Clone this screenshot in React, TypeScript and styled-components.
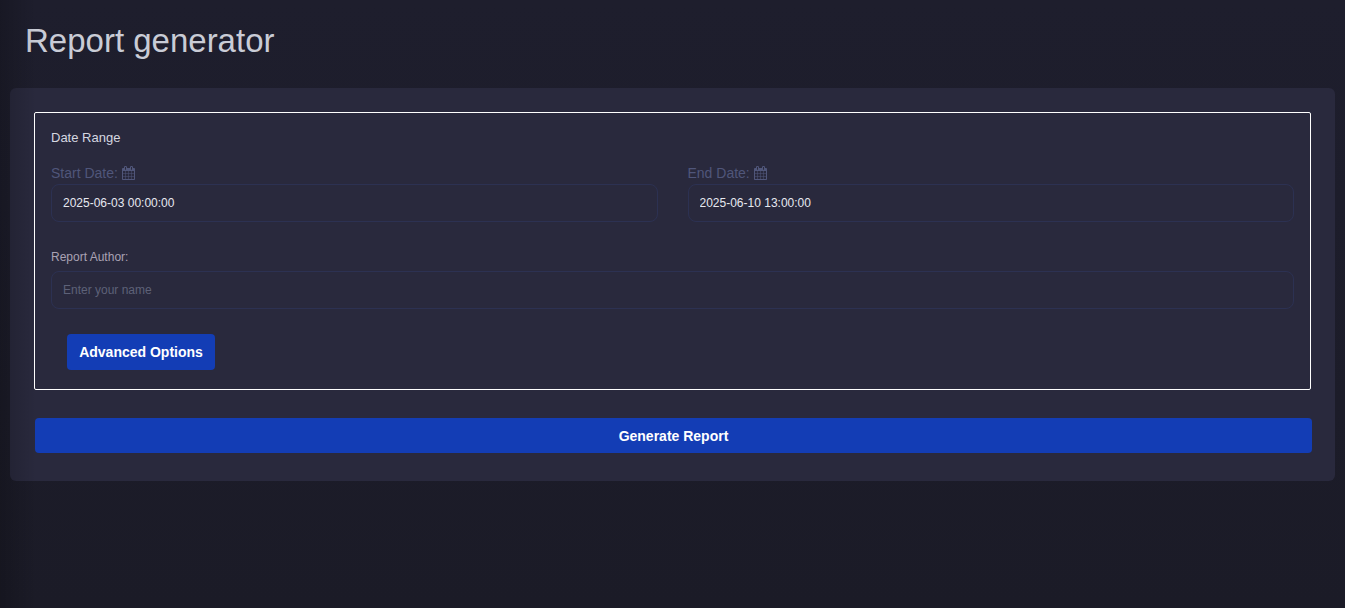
import React from 'react';
import styled, {createGlobalStyle} from 'styled-components';

const GlobalStyle = createGlobalStyle`
  html, body {
    margin: 0;
    padding: 0;
    height: 100%;
    background: #1e1e2d;
    font-family: "Liberation Sans", Arial, sans-serif;
  }
`;

const Page = styled.div`
  position: relative;
  min-height: 608px;
  box-sizing: border-box;
  padding: 0 10px;
  background: linear-gradient(to bottom, #1e1e2d, #1b1b27);
  overflow: hidden;
`;

const EdgeShade = styled.div`
  position: absolute;
  top: 0;
  left: 0;
  bottom: 0;
  width: 36px;
  pointer-events: none;
  background: linear-gradient(to right, rgba(0, 0, 0, 0.2), rgba(0, 0, 0, 0));
`;

const Title = styled.h1`
  margin: 0;
  padding: 21px 15px 0;
  height: 88px;
  box-sizing: border-box;
  font-size: 33px;
  line-height: 40px;
  font-weight: 400;
  color: #c9ccd6;
`;

const Panel = styled.section`
  height: 393px;
  box-sizing: border-box;
  padding: 24px;
  background: #29293d;
  border-radius: 6px;
`;

const Group = styled.fieldset`
  margin: 0;
  height: 278px;
  box-sizing: border-box;
  padding: 16px 16px 0;
  border: 1px solid #ffffff;
  border-radius: 2px;
`;

const GroupTitle = styled.div`
  font-size: 13px;
  line-height: 18px;
  color: #d5d7e0;
`;

const DateRow = styled.div`
  display: grid;
  grid-template-columns: 1fr 1fr;
  column-gap: 30px;
  margin-top: 17px;
`;

const DateLabel = styled.label`
  display: flex;
  align-items: center;
  gap: 4px;
  height: 18px;
  font-size: 14px;
  color: #50567a;
`;

const Field = styled.div`
  display: flex;
  flex-direction: column;
`;

const Input = styled.input`
  width: 100%;
  height: 38px;
  box-sizing: border-box;
  margin-top: 2px;
  padding: 0 11px;
  background: transparent;
  border: 1px solid #2c3152;
  border-radius: 8px;
  outline: none;
  font-family: inherit;
  font-size: 12px;
  color: #e6e8f0;

  &::placeholder {
    color: #5d6178;
  }
`;

const AuthorField = styled(Field)`
  margin-top: 27px;
`;

const AuthorLabel = styled.label`
  height: 20px;
  font-size: 12px;
  line-height: 16px;
  color: #a9a2b4;
`;

const Button = styled.button`
  height: 36px;
  border: 0;
  border-radius: 4px;
  background: #133db5;
  color: #ffffff;
  font-family: inherit;
  font-size: 14px;
  font-weight: 700;
`;

const AdvancedButton = styled(Button)`
  display: block;
  width: 148px;
  margin: 25px 0 0 16px;
`;

const GenerateButton = styled(Button)`
  display: block;
  width: 100%;
  margin: 28px 0 0 1px;
  height: 35px;
`;

const CalendarGlyph = styled.svg`
  width: 13px;
  height: 14px;
  fill: currentColor;
  flex: none;
`;

// Font Awesome 4 style calendar, the packaged icon sets only have the newer shape
function CalendarIcon() {
    return (
        <CalendarGlyph viewBox="0 0 1664 1792">
            <path d="M128 1664h288v-288h-288v288zm352 0h320v-288h-320v288zm-352-352h288v-320h-288v320zm352 0h320v-320h-320v320zm-352-384h288v-288h-288v288zm736 736h320v-288h-320v288zm-384-736h320v-288h-320v288zm768 736h288v-288h-288v288zm-384-352h320v-320h-320v320zm-352-864v-288q0-13-9.5-22.5t-22.5-9.5h-64q-13 0-22.5 9.5t-9.5 22.5v288q0 13 9.5 22.5t22.5 9.5h64q13 0 22.5-9.5t9.5-22.5zm736 864h288v-320h-288v320zm-384-384h320v-288h-320v288zm384 0h288v-288h-288v288zm32-480v-288q0-13-9.5-22.5t-22.5-9.5h-64q-13 0-22.5 9.5t-9.5 22.5v288q0 13 9.5 22.5t22.5 9.5h64q13 0 22.5-9.5t9.5-22.5zm384-64v1280q0 52-38 90t-90 38h-1408q-52 0-90-38t-38-90v-1280q0-52 38-90t90-38h128v-96q0-66 47-113t113-47h64q66 0 113 47t47 113v96h384v-96q0-66 47-113t113-47h64q66 0 113 47t47 113v96h128q52 0 90 38t38 90z"/>
        </CalendarGlyph>
    );
}

export default function App() {
    return (
        <Page>
            <GlobalStyle/>
            <Title>Report generator</Title>
            <Panel>
                <Group>
                    <GroupTitle>Date Range</GroupTitle>
                    <DateRow>
                        <Field>
                            <DateLabel>Start Date: <CalendarIcon/></DateLabel>
                            <Input readOnly value="2025-06-03 00:00:00"/>
                        </Field>
                        <Field>
                            <DateLabel>End Date: <CalendarIcon/></DateLabel>
                            <Input readOnly value="2025-06-10 13:00:00"/>
                        </Field>
                    </DateRow>
                    <AuthorField>
                        <AuthorLabel>Report Author:</AuthorLabel>
                        <Input placeholder="Enter your name"/>
                    </AuthorField>
                    <AdvancedButton>Advanced Options</AdvancedButton>
                </Group>
                <GenerateButton>Generate Report</GenerateButton>
            </Panel>
            <EdgeShade/>
        </Page>
    );
}
